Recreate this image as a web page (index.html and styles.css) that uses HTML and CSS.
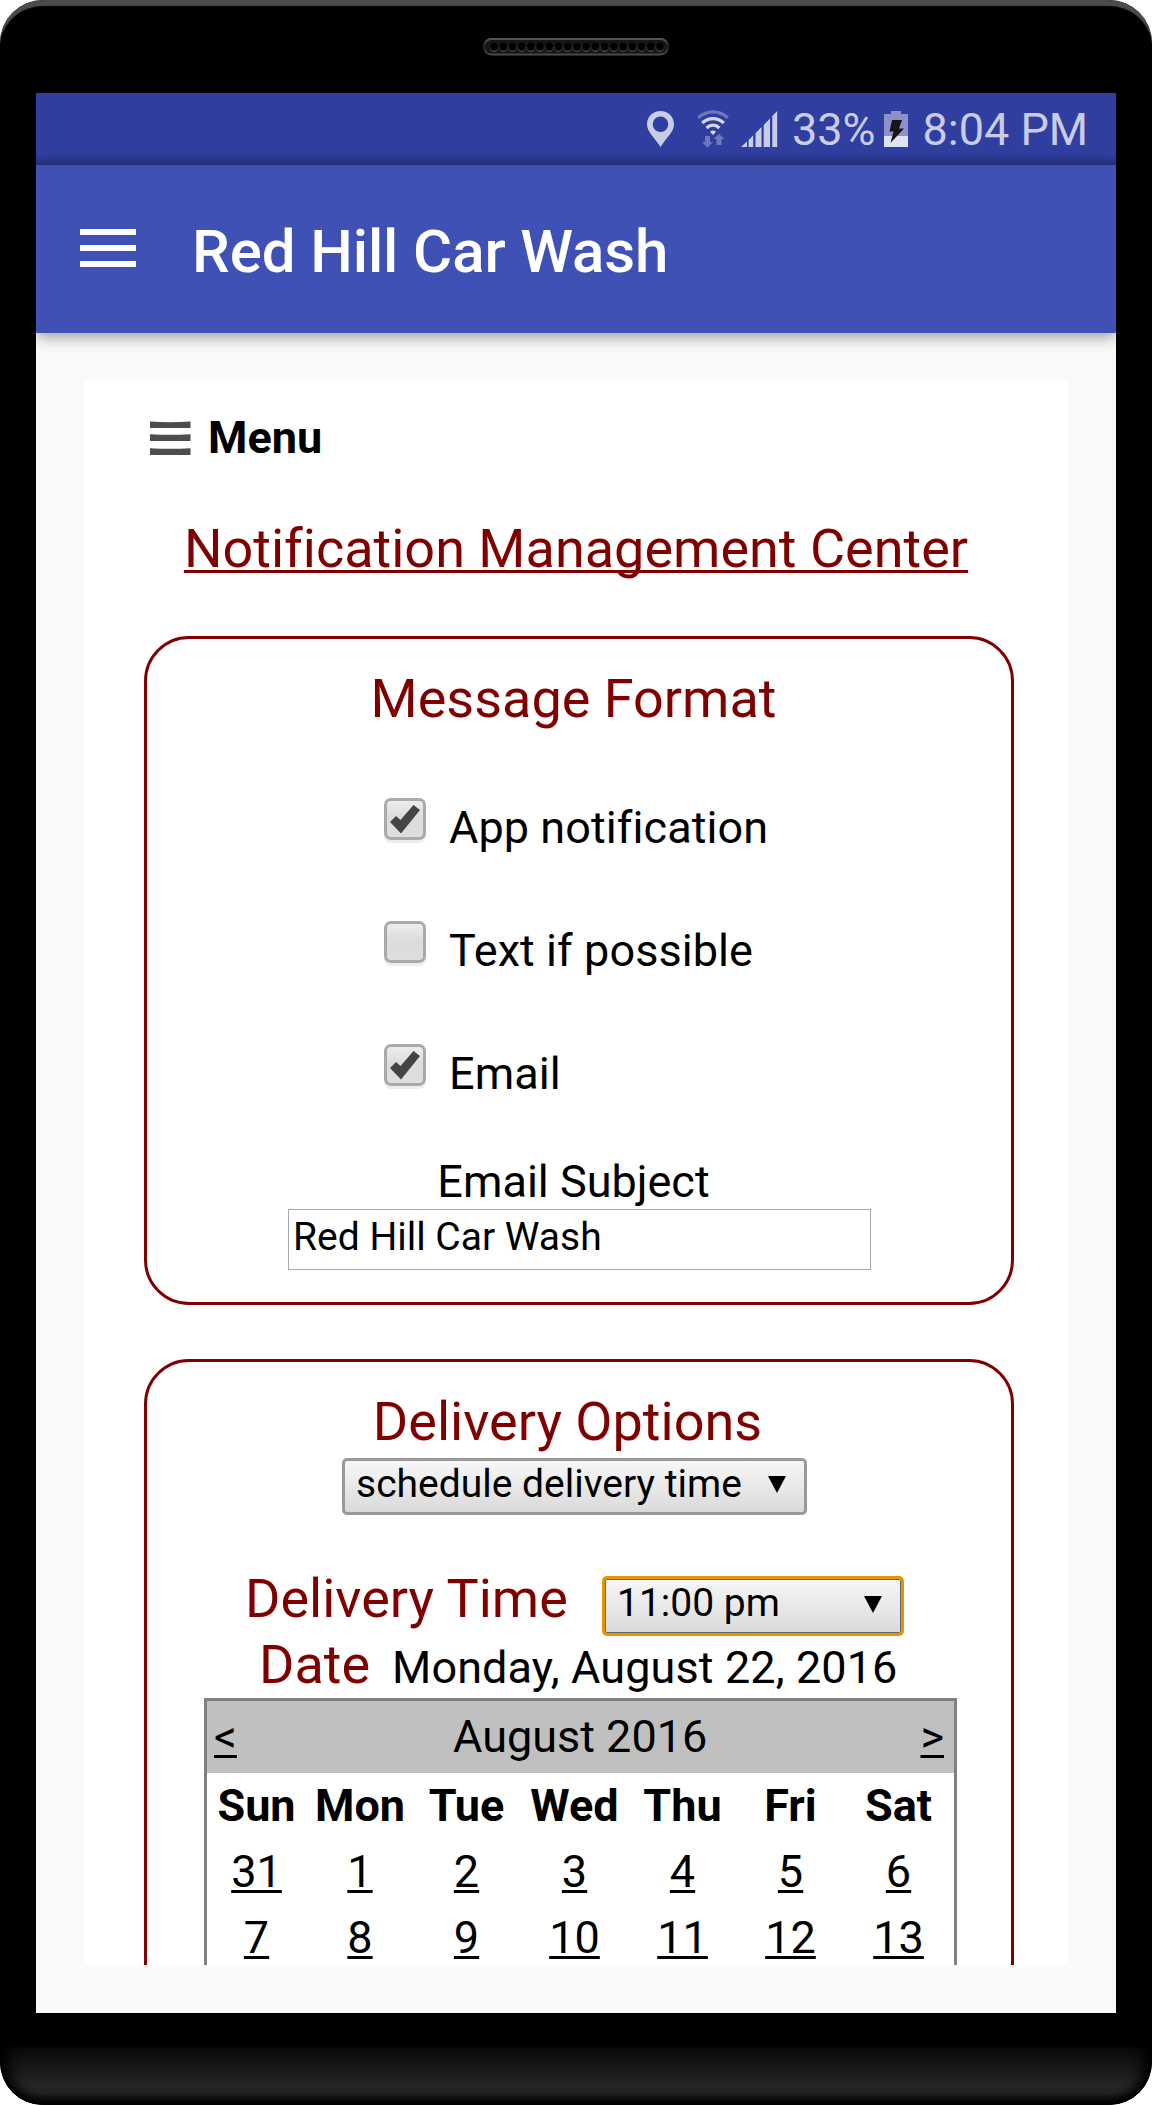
FILE: index.html
```html
<!DOCTYPE html>
<html lang="en">
<head>
<meta charset="utf-8">
<title>Red Hill Car Wash</title>
<link rel="stylesheet" href="styles.css">
</head>
<body>
<div class="phone">
  <div class="bezel-top">
    <svg class="speaker" width="186" height="18" viewBox="0 0 186 18">
      <defs>
        <pattern id="holes" x="6.4" y="0" width="9.22" height="18" patternUnits="userSpaceOnUse">
          <ellipse cx="4.6" cy="9.6" rx="4" ry="4.4" fill="#4a4a4a"/>
          <ellipse cx="4.6" cy="8.6" rx="3.7" ry="4.2" fill="#000"/>
        </pattern>
        <linearGradient id="rim" x1="0" y1="0" x2="0" y2="1">
          <stop offset="0" stop-color="#555"/><stop offset=".5" stop-color="#222"/><stop offset="1" stop-color="#4c4c4c"/>
        </linearGradient>
      </defs>
      <rect x="1" y="1" width="184" height="15.6" rx="7.5" fill="#161616" stroke="url(#rim)" stroke-width="2"/>
      <rect x="6.4" y="0" width="175.2" height="18" fill="url(#holes)"/>
    </svg>
  </div>
  <div class="screen">
    <div class="status-bar">
      <svg class="pin" width="27" height="36" viewBox="0 0 27 36"><path fill-rule="evenodd" fill="#c9cce6" d="M13.5 0C5.800 0 0 5.800 0 13.200C0 21.500 8 26.500 13.500 36C19 26.500 27 21.500 27 13.200C27 5.800 21.200 0 13.500 0ZM13.500 5.500a7.800 7.800 0 1 1 0 15.600a7.800 7.800 0 1 1 0-15.600Z"/></svg>
      <svg class="wifi" width="32" height="38" viewBox="0 0 32 38" fill="none" stroke-width="3.200">
        <path stroke="#6f78bd" d="M1.200 7.700Q8 1.800 16 1.800T30.800 7.700"/>
        <path stroke="#d4d7ec" d="M5.200 13Q10 8.600 16 8.600T26.800 13"/>
        <path stroke="#d4d7ec" d="M9.600 18Q12.500 15.200 16 15.200T22.400 18"/>
        <path fill="#d4d7ec" d="M16 25L13 21.800Q16 19.400 19 21.800Z"/>
        <path fill="#6f78bd" d="M8 26h5v6h3l-5.500 5.500L5 32h3ZM19.500 35h5v-6h3L22 24l-5.500 5h3Z"/>
      </svg>
      <svg class="signal" width="38" height="36" viewBox="0 0 38 36" fill="#c9cce6"><path d="M1 36L7 30.500V36ZM8.600 29L13.200 24.500V36H8.600ZM15.500 22.300L21.500 16V36H15.500ZM23.700 14L30 7.500V36H23.700ZM32.300 5L37.200 0V36H32.300Z"/></svg>
      <span class="percent">33%</span>
      <svg class="battery" width="24" height="36" viewBox="0 0 24 36">
        <path fill="#8b92c9" d="M7 0h10v3h7v22H0V3h7Z"/><path fill="#dfe2f2" d="M0 25h24v11H0Z"/>
        <path fill="#161616" d="M8 9h10l-3 8.500h5L6.500 32l3-11.500H5.500Z"/>
      </svg>
      <span class="clock">8:04 PM</span>
    </div>
    <header class="app-bar">
      <svg width="56" height="38" viewBox="0 0 56 38" fill="#fff"><path d="M0 0h56v6H0zM0 16h56v6H0zM0 32h56v6H0z"/></svg>
      <h1>Red Hill Car Wash</h1>
    </header>
    <main class="page">
      <nav class="menu">
        <svg width="41" height="35" viewBox="0 0 41 35" fill="#4d4d4d"><path d="M0 .5Q20 1.800 40.500 .5V7H0ZM0 13.200Q20 14.500 40.500 13.200V20H0ZM0 27.200Q20 28.500 40.500 27.200V34H0Z"/></svg>
        <b>Menu</b>
      </nav>
      <h2 class="page-title"><span>Notification Management Center</span></h2>
      <section class="panel format">
        <h3>Message Format</h3>
        <div class="option"><i class="check"><svg width="30" height="29" viewBox="0 0 30 29"><path fill="#444" d="M0 17L6 11L10.500 15L23.500 0L30 5L11 28.500Z"/></svg></i><span>App notification</span></div>
        <div class="option"><i class="check"></i><span>Text if possible</span></div>
        <div class="option"><i class="check"><svg width="30" height="29" viewBox="0 0 30 29"><path fill="#444" d="M0 17L6 11L10.500 15L23.500 0L30 5L11 28.500Z"/></svg></i><span>Email</span></div>
        <div class="subject-label">Email Subject</div>
        <div class="subject-input">Red Hill Car Wash</div>
      </section>
      <section class="panel delivery">
        <h3>Delivery Options</h3>
        <div class="select mode"><span>schedule delivery time</span><i class="arrow"></i></div>
        <div class="time-row"><h3>Delivery Time</h3><div class="select focused"><span>11:00 pm</span><i class="arrow"></i></div></div>
        <div class="date-row"><h3>Date</h3><span>Monday, August 22, 2016</span></div>
        <div class="calendar">
          <div class="month"><a>&lt;</a><span>August 2016</span><a>&gt;</a></div>
          <div class="days">
            <b>Sun</b><b>Mon</b><b>Tue</b><b>Wed</b><b>Thu</b><b>Fri</b><b>Sat</b>
            <a>31</a><a>1</a><a>2</a><a>3</a><a>4</a><a>5</a><a>6</a>
            <a>7</a><a>8</a><a>9</a><a>10</a><a>11</a><a>12</a><a>13</a>
          </div>
        </div>
      </section>
    </main>
  </div>
  <div class="bezel-bottom"></div>
</div>
</body>
</html>
```
FILE: styles.css
```css
* { box-sizing: border-box; }
body { margin: 0; background: #fff; font-family: Roboto, sans-serif; font-size: 45px; font-variant-ligatures: none; color: #000; }
h1, h2, h3 { margin: 0; font-weight: 400; }
svg { display: block; flex: none; }

.phone { width: 1152px; height: 2105px; background: #000; border-radius: 43px; overflow: hidden; }
.bezel-top { height: 93px; padding: 38px 0 0 483px; border-radius: 43px 43px 0 0; box-shadow: inset 0 7px 1px -1px #4c4c4c; }
.screen { width: 1080px; height: 1920px; margin: 0 36px; background: #fafafa; overflow: hidden; }
.bezel-bottom { height: 58px; margin-top: 34px; border-radius: 0 0 43px 43px; background: linear-gradient(#0b0b0b, #151515 30%, #262626 66%, #222 80%, #0c0c0c 97%, #000); box-shadow: inset 0 -4px 8px #000, inset 18px 0 16px -10px #000, inset -18px 0 16px -10px #000; }

.status-bar { height: 72px; padding: 0 31px 0 611px; display: flex; align-items: center; color: #c9cce6; background: linear-gradient(#303f9f 84%, #2b388e 94%, #263279); }
.wifi { margin-left: 23px; }
.signal { margin-left: 11px; }
.percent { margin-left: 14px; width: 84px; line-height: 73px; }
.battery { margin-left: 8px; }
.clock { margin-left: 15px; line-height: 73px; white-space: nowrap; }

.app-bar { position: relative; height: 168px; padding: 1px 44px 1px; display: flex; align-items: center; gap: 56px; color: #fff; background: #3f51b5; box-shadow: 0 4px 14px rgba(0,0,0,.38); }
.app-bar svg { margin-bottom: 2px; }
.app-bar h1 { font-size: 60px; font-weight: 500; line-height: 70px; margin-top: 5px; letter-spacing: -.1px; }

.page { width: 984px; height: 1584px; margin: 48px auto 0; background: #fff; overflow: hidden; }
.menu { height: 114px; padding-left: 66px; display: flex; align-items: center; gap: 17px; }
.menu b { line-height: 54px; }
.page-title { height: 141px; padding-top: 24px; text-align: center; font-size: 54px; line-height: 60px; color: maroon; }
.page-title span { text-decoration: underline; text-decoration-thickness: 3px; text-underline-offset: 3px; text-decoration-skip-ink: none; }

.panel { width: 870px; height: 669px; margin-left: 60px; padding-top: 30px; border: 3px solid maroon; border-radius: 45px; }
.panel h3 { font-size: 54px; line-height: 60px; text-align: center; padding-right: 11px; color: maroon; }
.option { height: 123px; padding-left: 237px; display: flex; align-items: center; gap: 23px; letter-spacing: .07px; }
.panel > h3 + .option { margin-top: 37px; }
.check { width: 42px; height: 42px; margin-bottom: 17px; padding: 4px 3px; border: 3px solid #aaa; border-radius: 7px; background: linear-gradient(#ededed, #dcdcdc 45%, #dedede); box-shadow: 0 3px 0 #ededed; }
.subject-label { margin-top: 20px; padding-right: 11px; line-height: 54px; text-align: center; }
.subject-input { width: 583px; height: 61px; margin-left: 141px; padding-left: 4px; border: 1px solid #a9a9a9; font-size: 39px; line-height: 55px; }

.delivery { height: 800px; margin-top: 54px; }
.delivery > h3 { padding-right: 23px; }
.select { display: flex; justify-content: space-between; border: 3px solid #999; border-radius: 5px; background: linear-gradient(#f7f7f7, #dadada); font-size: 39px; line-height: 46px; }
.mode { width: 465px; height: 57px; margin: 6px 0 0 195px; padding: 0 18px 0 11px; }
.arrow { width: 18px; height: 17px; margin-top: 15px; background: #000; clip-path: polygon(0 0, 100% 0, 50% 100%); }
.time-row { display: flex; margin: 54px 0 0 98px; }
.time-row h3 { width: 357px; padding: 0; text-align: left; }
.focused { width: 302px; height: 60px; margin-top: 7px; padding: 0 19px 0 12px; border-color: #e69500; box-shadow: inset 0 0 0 1px #666; line-height: 49px; }
.focused .arrow { margin-top: 17px; }
.date-row { display: flex; align-items: baseline; margin: -1px 0 0 112px; }
.date-row h3 { width: 133px; padding: 0; text-align: left; }
.date-row span { letter-spacing: .1px; }
.calendar { width: 753px; height: 600px; margin: 3px 0 0 57px; border: 3px solid #808080; }
.month { height: 72px; padding: 0 10px 0 7px; display: flex; justify-content: space-between; line-height: 72px; background: #c0c0c0; }
.month span { padding-left: 3px; }
.days { display: grid; grid-template-columns: 99px 108px 105px 111px 105px 111px 105px; grid-auto-rows: 66px; text-align: center; line-height: 66px; }
.calendar a { text-decoration: underline; text-decoration-thickness: 3px; text-underline-offset: 3px; text-decoration-skip-ink: none; }
```
